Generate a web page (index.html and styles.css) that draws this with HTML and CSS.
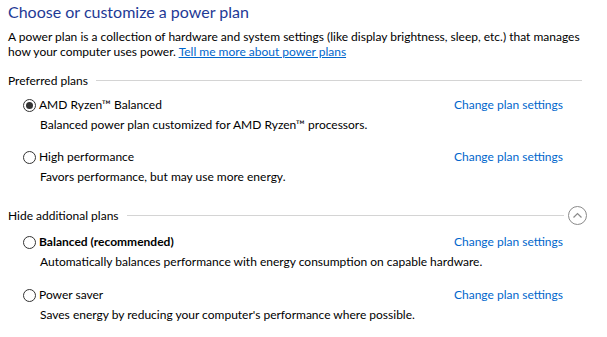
FILE: index.html
```html
<!DOCTYPE html>
<html lang="en">
<head>
<meta charset="utf-8">
<title>Power Options</title>
<link rel="stylesheet" href="styles.css">
</head>
<body>
<main class="page">
  <h1 class="title">Choose or customize a power plan</h1>
  <p class="intro">A power plan is a collection of hardware and system settings (like display brightness, sleep, etc.) that manages how your computer uses power. <a class="link" href="#">Tell me more about power plans</a></p>

  <section class="group">
    <div class="group-head">
      <span class="group-label">Preferred plans</span>
      <span class="rule"></span>
    </div>
    <div class="plan">
      <label class="plan-name"><span class="radio checked"></span>AMD Ryzen™ Balanced</label>
      <a class="change" href="#">Change plan settings</a>
      <div class="plan-desc">Balanced power plan customized for AMD Ryzen™ processors.</div>
    </div>
    <div class="plan">
      <label class="plan-name"><span class="radio"></span>High performance</label>
      <a class="change" href="#">Change plan settings</a>
      <div class="plan-desc">Favors performance, but may use more energy.</div>
    </div>
  </section>

  <section class="group group-extra">
    <div class="group-head">
      <span class="group-label">Hide additional plans</span>
      <span class="rule"></span>
      <span class="collapse"><svg viewBox="0 0 19 19" width="19" height="19"><circle cx="9.5" cy="9.5" r="9" fill="none" stroke="#8a8a8a" stroke-width="1"/><path d="M5.5 11.5 L9.5 7.5 L13.5 11.5" fill="none" stroke="#8a8a8a" stroke-width="1.2"/></svg></span>
    </div>
    <div class="plan">
      <label class="plan-name bold"><span class="radio"></span>Balanced (recommended)</label>
      <a class="change" href="#">Change plan settings</a>
      <div class="plan-desc">Automatically balances performance with energy consumption on capable hardware.</div>
    </div>
    <div class="plan">
      <label class="plan-name"><span class="radio"></span>Power saver</label>
      <a class="change" href="#">Change plan settings</a>
      <div class="plan-desc">Saves energy by reducing your computer's performance where possible.</div>
    </div>
  </section>
</main>
</body>
</html>
```
FILE: styles.css
```css
html, body {
  margin: 0;
  padding: 0;
  background: #ffffff;
}

body {
  font-family: Lato, "Noto Sans", sans-serif;
  font-size: 12px;
  color: #000000;
}

.page {
  padding: 1px 0 0 8px;
  width: 582px;
}

.title {
  margin: 0;
  font-size: 16px;
  font-weight: normal;
  line-height: 21px;
  color: #1e3a96;
}

.intro {
  margin: 7px 0 0 0;
  line-height: 15px;
}

.link {
  color: #0066cc;
  text-decoration: underline;
}

.group {
  margin-top: 14px;
}

.group-head {
  display: flex;
  align-items: center;
  gap: 8px;
  height: 15px;
  width: 574px;
}

.group-label {
  white-space: nowrap;
  line-height: 15px;
}

.rule {
  flex: 1;
  height: 1px;
  background: #d4d4d4;
}

.plan {
  display: grid;
  grid-template-columns: 431px auto;
  margin: 7px 0 15px 15px;
}

.plan-name {
  display: flex;
  align-items: center;
  gap: 3px;
  line-height: 20px;
}

.plan-name.bold {
  font-weight: bold;
}

.radio {
  width: 11px;
  height: 11px;
  border: 1px solid #333333;
  border-radius: 50%;
  display: flex;
  align-items: center;
  justify-content: center;
}

.radio.checked::after {
  content: "";
  width: 7px;
  height: 7px;
  border-radius: 50%;
  background: #333333;
}

.change {
  color: #0066cc;
  text-decoration: none;
  line-height: 20px;
}

.plan-desc {
  grid-column: 1 / 3;
  margin: 2px 0 0 17px;
  line-height: 15px;
}

.group-extra {
  margin-top: 21px;
}

.group-extra .group-head {
  height: 20px;
  width: 579px;
  gap: 4px;
}

.group-extra .group-label {
  margin-right: 4px;
}

.collapse {
  display: flex;
  width: 19px;
  height: 19px;
}

.group-extra .plan {
  margin-bottom: 16px;
}

.group-extra .plan:first-of-type {
  margin-top: 6px;
}
```
